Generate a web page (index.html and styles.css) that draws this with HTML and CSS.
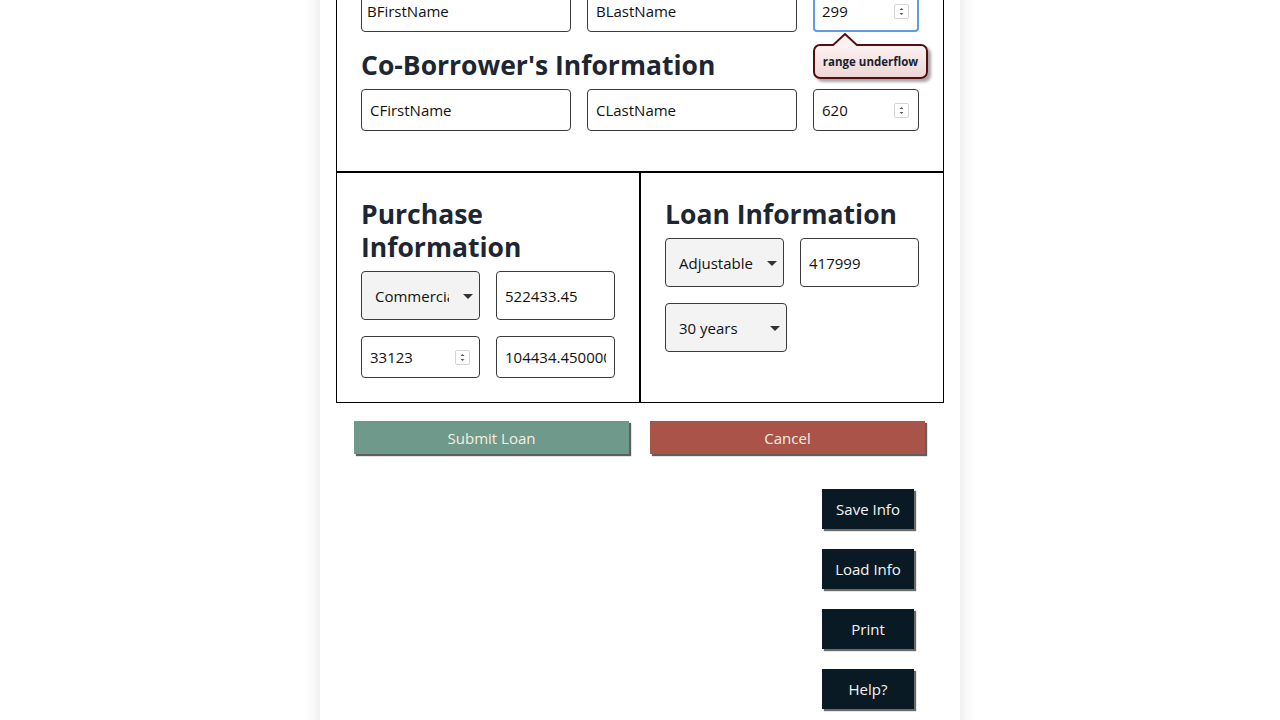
FILE: index.html
```html
<!DOCTYPE html>
<html lang="en">
<head>
<meta charset="utf-8">
<title>Loan Application</title>
<link rel="stylesheet" href="styles.css">
</head>
<body>
<div class="card">
  <section class="box top">
    <h2>Borrower's Information</h2>
    <div class="row3">
      <input class="field first" type="text" value="BFirstName">
      <input class="field" type="text" value="BLastName">
      <div class="field num focus">
        <input class="numtext" type="text" value="299">
        <svg class="spin" viewBox="0 0 15 15" width="15" height="15"><rect x="0.5" y="0.5" width="14" height="14" rx="1.5" fill="#fff" stroke="#d4d4d4"/><path d="M5.5 6 L7.5 4 L9.5 6 Z" fill="#555"/><path d="M5.5 9 L7.5 11 L9.5 9 Z" fill="#555"/></svg>
        <div class="tip">
          <svg class="tip-arrow" viewBox="0 0 26 13" width="26" height="13"><path d="M0 13 L13 1 L26 13" fill="#fcf1f1" stroke="#560d0d" stroke-width="2"/></svg>
          <span>range underflow</span>
        </div>
      </div>
    </div>
    <h2 class="mt">Co-Borrower's Information</h2>
    <div class="row3">
      <input class="field" type="text" value="CFirstName">
      <input class="field" type="text" value="CLastName">
      <div class="field num">
        <input class="numtext" type="text" value="620">
        <svg class="spin" viewBox="0 0 15 15" width="15" height="15"><rect x="0.5" y="0.5" width="14" height="14" rx="1.5" fill="#fff" stroke="#d4d4d4"/><path d="M5.5 6 L7.5 4 L9.5 6 Z" fill="#555"/><path d="M5.5 9 L7.5 11 L9.5 9 Z" fill="#555"/></svg>
      </div>
    </div>
  </section>

  <div class="split">
    <section class="box half">
      <h2>Purchase Information</h2>
      <div class="grid2">
        <div class="sel"><select><option>Commercial</option></select></div>
        <input class="field tall" type="text" value="522433.45">
        <div class="field num">
          <input class="numtext" type="text" value="33123">
          <svg class="spin" viewBox="0 0 15 15" width="15" height="15"><rect x="0.5" y="0.5" width="14" height="14" rx="1.5" fill="#fff" stroke="#d4d4d4"/><path d="M5.5 6 L7.5 4 L9.5 6 Z" fill="#555"/><path d="M5.5 9 L7.5 11 L9.5 9 Z" fill="#555"/></svg>
        </div>
        <input class="field" type="text" value="104434.45000000001">
      </div>
    </section>
    <section class="box half">
      <h2>Loan Information</h2>
      <div class="wrap">
        <div class="sel"><select><option>Adjustable</option></select></div>
        <input class="field tall" type="text" value="417999">
        <div class="sel wide"><select><option>30 years</option></select></div>
      </div>
    </section>
  </div>

  <div class="actions">
    <button class="btn submit" type="button">Submit Loan</button>
    <button class="btn cancel" type="button">Cancel</button>
  </div>

  <div class="side">
    <button class="dark" type="button">Save Info</button>
    <button class="dark" type="button">Load Info</button>
    <button class="dark" type="button">Print</button>
    <button class="dark" type="button">Help?</button>
  </div>
</div>
</body>
</html>
```

FILE: styles.css
```css
* { box-sizing: border-box; }

body {
  margin: 0;
  background: #ffffff;
  font-family: "Open Sans", "Noto Sans", sans-serif;
}

.card {
  width: 640px;
  margin: -75px auto 0;
  padding: 0 16px 40px;
  background: #ffffff;
  box-shadow: 0 0 18px rgba(0, 0, 0, 0.12);
}

.box {
  border: 1px solid #000;
  padding: 24px;
}

.top {
  width: 608px;
  padding-bottom: 40px;
}

h2 {
  margin: 0 0 7px;
  font-size: 26.5px;
  line-height: 33px;
  font-weight: 700;
  color: #1d2631;
}

.mt { margin-top: 17px; }

.row3 {
  display: grid;
  grid-template-columns: 210px 210px 106px;
  gap: 16px;
}

.field {
  height: 42px;
  border: 1px solid #3b3b3b;
  border-radius: 4px;
  padding: 0 8px;
  font-family: "Open Sans", "Noto Sans", sans-serif;
  font-size: 15px;
  color: #111;
  background: #fff;
  width: 100%;
  outline: none;
}

.field.first { padding-left: 5px; }

.field.tall { height: 49px; }

.num {
  position: relative;
  display: flex;
  align-items: center;
  padding-right: 9px;
}

.num.focus {
  border: 2px solid #5f9be6;
  padding-left: 7px;
  padding-right: 8px;
}

.numtext {
  flex: 1;
  min-width: 0;
  border: 0;
  padding: 0;
  font: inherit;
  color: inherit;
  background: transparent;
  outline: none;
}

.spin { flex: none; display: block; }

.tip {
  position: absolute;
  left: -2px;
  top: calc(100% + 14px);
  width: 115px;
  height: 35px;
  border: 2px solid #560d0d;
  border-radius: 7px;
  background: linear-gradient(#fcf1f1, #eed6d6);
  box-shadow: 3px 3px 3px rgba(0, 0, 0, 0.35);
  display: flex;
  align-items: center;
  justify-content: center;
  font-family: "Open Sans", "Noto Sans", sans-serif;
  font-size: 11.5px;
  font-weight: 700;
  color: #1a1f2e;
  z-index: 2;
}

.tip-arrow {
  position: absolute;
  left: 17px;
  top: -13px;
}

.split {
  display: flex;
  width: 608px;
}

.half {
  width: 304px;
  padding-top: 25px;
}

.grid2 {
  display: grid;
  grid-template-columns: 119px 119px;
  gap: 16px;
}

.wrap {
  display: flex;
  flex-wrap: wrap;
  gap: 16px;
}

.wrap > * { width: 119px; }
.wrap > .wide { width: 122px; }

.sel {
  position: relative;
  height: 49px;
  width: 119px;
}

.sel select {
  -webkit-appearance: none;
  appearance: none;
  width: 100%;
  height: 100%;
  border: 1px solid #3b3b3b;
  border-radius: 4px;
  background: #f3f3f3;
  padding: 0 30px 0 13px;
  font-family: "Open Sans", "Noto Sans", sans-serif;
  font-size: 15px;
  color: #111;
  outline: none;
}

.sel::after {
  content: "";
  position: absolute;
  right: 7px;
  top: 23px;
  border-left: 5px solid transparent;
  border-right: 5px solid transparent;
  border-top: 5px solid #333;
  pointer-events: none;
}

.actions {
  display: flex;
  gap: 21px;
  padding: 18px 0 0 18px;
}

.btn {
  width: 275px;
  height: 33px;
  border: 0;
  font-family: "Open Sans", "Noto Sans", sans-serif;
  font-size: 15px;
  color: #f6efe2;
  box-shadow: 2px 2px 1px #5e5e5e;
}

.submit { background: #6f998a; }
.cancel { background: #aa5449; }

.side {
  display: flex;
  flex-direction: column;
  align-items: flex-end;
  gap: 20px;
  margin-top: 35px;
  padding-right: 30px;
}

.dark {
  width: 92px;
  height: 40px;
  border: 0;
  background: #0a1a24;
  color: #f4f4f4;
  font-family: "Open Sans", "Noto Sans", sans-serif;
  font-size: 15px;
  box-shadow: 2px 2px 1px #6a6a6a;
}
```
